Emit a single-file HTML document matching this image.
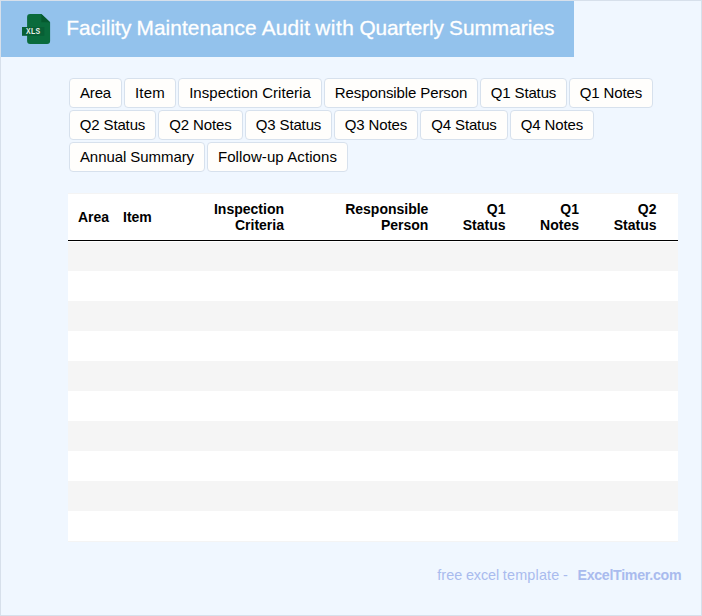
<!DOCTYPE html>
<html><head><meta charset="utf-8">
<title>Facility Maintenance Audit with Quarterly Summaries</title>
<style>
html,body{margin:0;padding:0;}
body{width:702px;height:616px;background:#f0f7ff;font-family:"Liberation Sans",sans-serif;position:relative;overflow:hidden;}
.frame{position:absolute;left:0;top:0;width:700px;height:614px;border:1px solid #d7e0eb;}
.hdr{position:absolute;left:1px;top:1px;width:573px;height:56px;background:#93c2ec;}
.icon{position:absolute;left:20px;top:11px;}
.title{position:absolute;left:65.19px;top:0;word-spacing:-0.64px;height:56px;line-height:53.2px;font-size:20.8px;color:#fff;-webkit-text-stroke:0.3px #fff;white-space:nowrap;}
.tag{position:absolute;box-sizing:border-box;height:30px;line-height:28px;border:1px solid #d7e1ed;border-radius:4px;background:#fffefc;font-size:15px;color:#000;text-align:center;white-space:nowrap;}
.tbl{position:absolute;left:68px;top:194px;width:610px;height:347px;background:#fff;overflow:hidden;}
.hl{position:absolute;left:0;top:46px;width:610px;height:1px;background:#000;}
.r{position:absolute;left:0;width:610px;height:30px;background:#f5f5f5;}
.th{position:absolute;font-weight:bold;font-size:14px;line-height:16px;color:#000;white-space:nowrap;}
.th.r2{text-align:right;}
.ft{position:absolute;top:566px;font-size:14px;color:#a9bbee;white-space:nowrap;line-height:18px;}
.ft b{font-size:14.2px;letter-spacing:-0.289px;margin-left:6px;}
</style></head><body>
<div class="frame"></div>
<div class="hdr">
<svg class="icon" width="32" height="34" viewBox="0 0 32 34">
<path d="M9.1 2 H20.4 L29.1 10.2 V29 a3 3 0 0 1 -3 3 H9.1 a3 3 0 0 1 -3 -3 V5 a3 3 0 0 1 3 -3 Z" fill="#0a6b3c"/>
<path d="M20.4 2 L29.1 10.2 H20.4 Z" fill="#05592e"/>
<rect x="1" y="15" width="22.3" height="8.8" fill="#085f35"/>
<text transform="translate(5.1 22.49) scale(0.348 0.47)" font-family="Liberation Sans, sans-serif" font-weight="bold" font-size="20" letter-spacing="0.6" fill="#e9f1ec">XLS</text>
</svg>
<div class="title"><span style="letter-spacing:0.057px">Facility</span> <span style="letter-spacing:0.087px">Maintenance</span> <span style="letter-spacing:0.219px">Audit</span> <span style="letter-spacing:0.492px">with</span> <span style="letter-spacing:-0.122px">Quarterly</span> <span style="letter-spacing:0.035px">Summaries</span></div></div>

<div class="tag" style="left:69px;top:78px;width:53px;letter-spacing:-0.211px">Area</div>
<div class="tag" style="left:124px;top:78px;width:52px;letter-spacing:0.230px">Item</div>
<div class="tag" style="left:178px;top:78px;width:144px;letter-spacing:0.043px">Inspection Criteria</div>
<div class="tag" style="left:324px;top:78px;width:154px;letter-spacing:-0.107px">Responsible Person</div>
<div class="tag" style="left:480px;top:78px;width:87px;letter-spacing:-0.148px">Q1 Status</div>
<div class="tag" style="left:569px;top:78px;width:84px;letter-spacing:-0.129px">Q1 Notes</div>
<div class="tag" style="left:69px;top:110px;width:87px;letter-spacing:-0.148px">Q2 Status</div>
<div class="tag" style="left:158px;top:110px;width:85px;letter-spacing:-0.129px">Q2 Notes</div>
<div class="tag" style="left:245px;top:110px;width:87px;letter-spacing:-0.148px">Q3 Status</div>
<div class="tag" style="left:334px;top:110px;width:84px;letter-spacing:-0.129px">Q3 Notes</div>
<div class="tag" style="left:420px;top:110px;width:88px;letter-spacing:-0.148px">Q4 Status</div>
<div class="tag" style="left:510px;top:110px;width:84px;letter-spacing:-0.129px">Q4 Notes</div>
<div class="tag" style="left:69px;top:142px;width:136px;letter-spacing:-0.068px">Annual Summary</div>
<div class="tag" style="left:207px;top:142px;width:141px;letter-spacing:0.094px">Follow-up Actions</div>

<div style="position:absolute;left:68px;top:193px;width:610px;height:349px;background:#f4f4f4"></div>
<div class="tbl">
<div class="r" style="top:48px;height:29px"></div><div class="r" style="top:107px"></div><div class="r" style="top:167px"></div><div class="r" style="top:227px"></div><div class="r" style="top:287px"></div>
<div class="hl"></div>
<div class="th" style="left:10px;top:15px">Area</div>
<div class="th" style="left:55px;top:15px">Item</div>
<div class="th r2" style="right:394px;top:7px">Inspection<br>Criteria</div>
<div class="th r2" style="right:249.6px;top:7px">Responsible<br>Person</div>
<div class="th r2" style="right:172.5px;top:7px">Q1<br>Status</div>
<div class="th r2" style="right:99px;top:7px">Q1<br>Notes</div>
<div class="th r2" style="right:21.5px;top:7px">Q2<br>Status</div>
</div>
<div class="ft" style="left:437.3px;font-size:14.4px;word-spacing:-0.42px"><span style="letter-spacing:0.051px">free</span> <span style="letter-spacing:-0.062px">excel</span> <span style="letter-spacing:0.189px">template</span> - <b>ExcelTimer.com</b></div>
</body></html>
